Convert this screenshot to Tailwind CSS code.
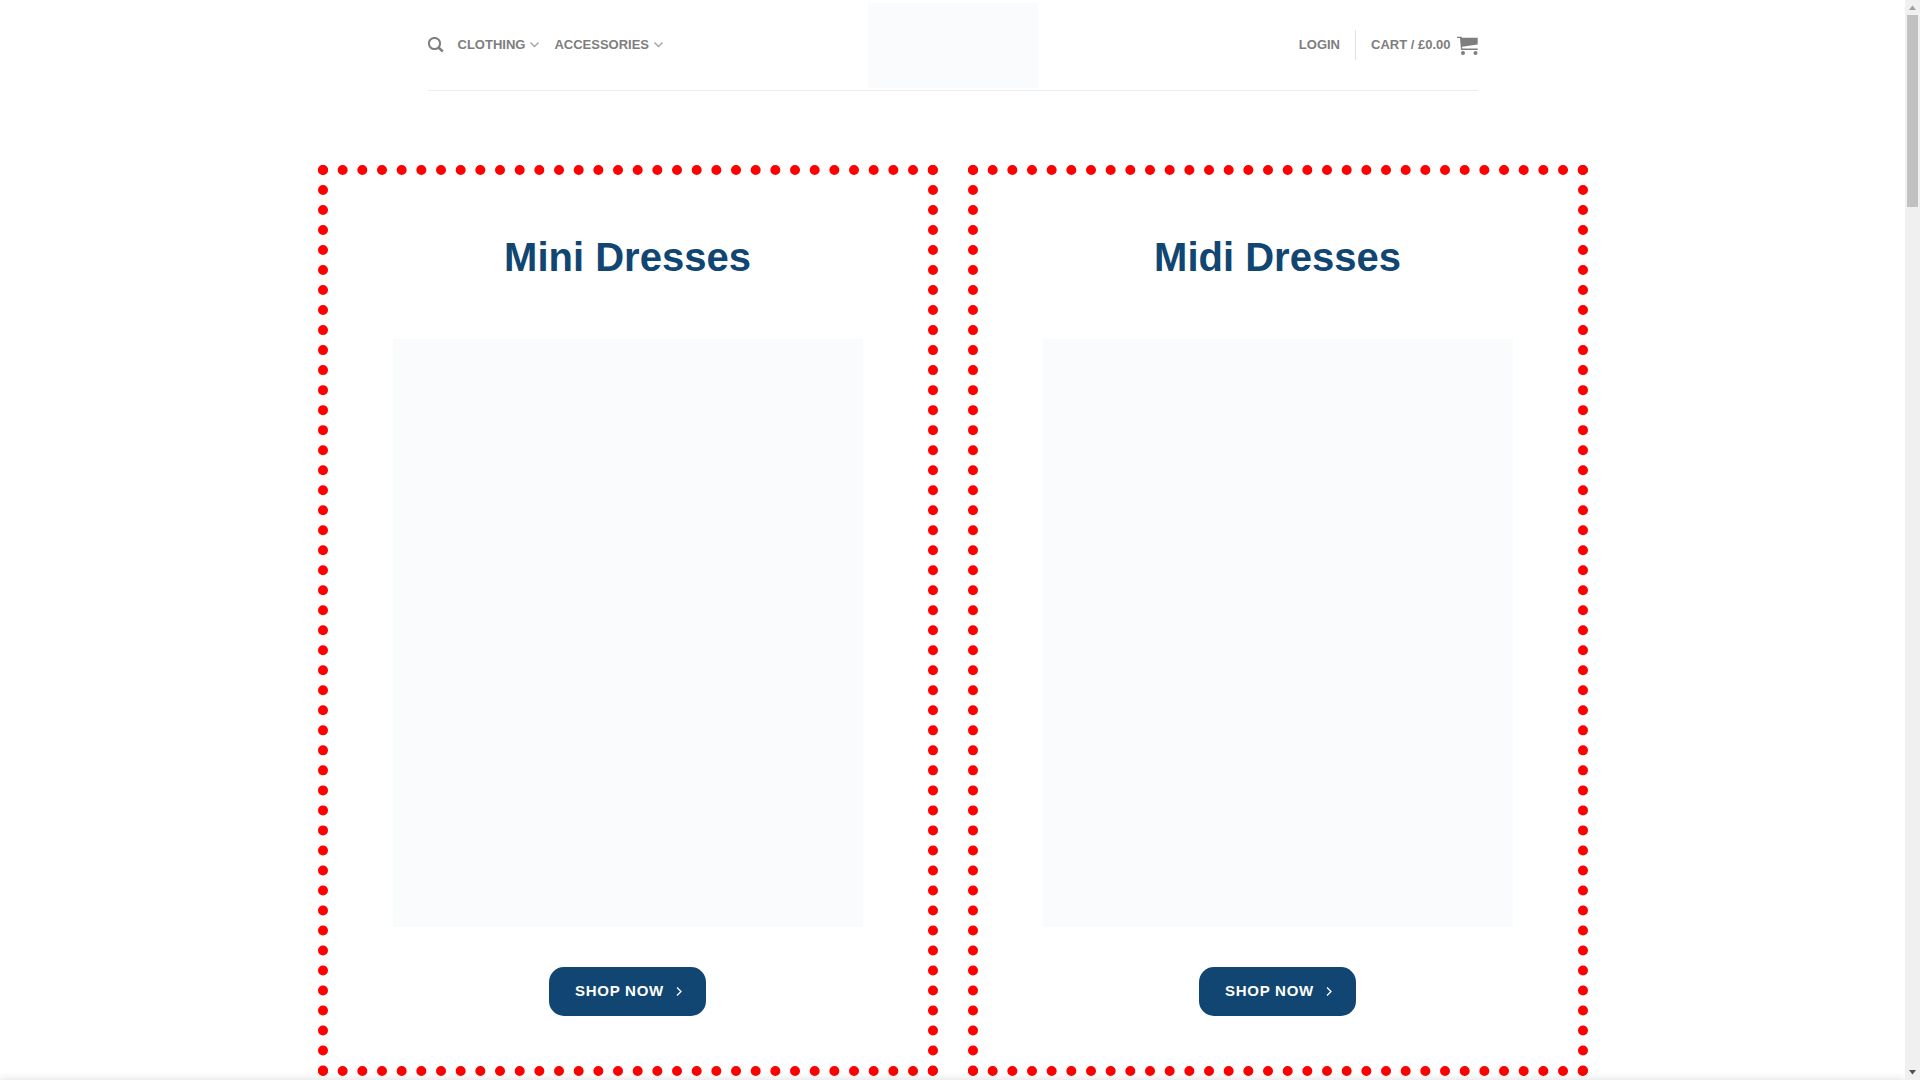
<!DOCTYPE html>
<html lang="en">

<head>
    <meta charset="UTF-8">
    <meta name="viewport" content="width=device-width, initial-scale=1.0">
    <title>Dresses</title>
    <script src="https://cdn.jsdelivr.net/npm/@tailwindcss/browser@4"></script>
</head>

<body class="flex min-h-screen bg-white font-['Liberation_Sans',Arial,sans-serif]">
    <div class="flex-1 min-w-0">
        <header class="mx-auto max-w-[1050px] flex items-center h-[91px] border-b border-[#ececec] text-[13px] font-bold text-[#7e7e7e]">
            <nav class="flex-1 flex items-center gap-[14px]">
                <a href="#" aria-label="Search">
                    <svg class="w-4 h-4" viewBox="0 0 16 16" fill="none" stroke="currentColor" stroke-width="2">
                        <circle cx="6.5" cy="6.5" r="5.6" />
                        <path d="M10.5 10.5l4.300 4" stroke-width="2.4" />
                    </svg>
                </a>
                <a href="#" class="flex items-center gap-1">CLOTHING
                    <svg class="w-[11px] h-[10px]" viewBox="0 0 11 10" fill="none" stroke="#a4a4a4" stroke-width="1.4">
                        <path d="M1.500 2.5l4 4 4-4" />
                    </svg>
                </a>
                <a href="#" class="flex items-center gap-1">ACCESSORIES
                    <svg class="w-[11px] h-[10px]" viewBox="0 0 11 10" fill="none" stroke="#a4a4a4" stroke-width="1.4">
                        <path d="M1.500 2.5l4 4 4-4" />
                    </svg>
                </a>
            </nav>

            <a href="#" aria-label="Home" class="block w-[170px] h-[85px] bg-[#fafbfd]"></a>

            <div class="flex-1 flex items-center justify-end gap-[15px]">
                <a href="#">LOGIN</a>
                <span class="w-px h-[30px] bg-[#e2e2e2]"></span>
                <a href="#" class="flex items-center gap-[6px]">CART / £0.00
                    <svg class="w-[21px] h-5" viewBox="0 0 21 20" fill="currentColor">
                        <path d="M0 1.700h4.4l.5 1H20.700v6.900L5 11.700l.2 1.900H20.700v1.300H4L3 3H0z" />
                        <circle cx="6" cy="18" r="2" />
                        <circle cx="18.500" cy="18" r="2" />
                    </svg>
                </a>
            </div>
        </header>

        <main class="mx-auto max-w-[1270px] pt-[74px] grid grid-cols-2 gap-[30px]">
            <section class="flex flex-col items-center border-[10px] border-dotted border-[#ff0000] px-[65px] pt-14 pb-[50px]">
                <h2 class="text-[40px] leading-[52px] font-bold text-[#114672]">Mini Dresses</h2>
                <div class="mt-14 w-full h-[588px] bg-[#fafbfd]"></div>
                <button class="mt-10 flex items-center gap-3 h-[49px] pl-[26px] pr-6 rounded-[15px] bg-[#114672] text-[15px] font-bold tracking-wider text-white">SHOP NOW
                    <svg class="w-1.5 h-[10px]" viewBox="0 0 6 10" fill="none" stroke="currentColor" stroke-width="1.3">
                        <path d="M1 .500l4 4-4 4" />
                    </svg>
                </button>
            </section>

            <section class="flex flex-col items-center border-[10px] border-dotted border-[#ff0000] px-[65px] pt-14 pb-[50px]">
                <h2 class="text-[40px] leading-[52px] font-bold text-[#114672]">Midi Dresses</h2>
                <div class="mt-14 w-full h-[588px] bg-[#fafbfd]"></div>
                <button class="mt-10 flex items-center gap-3 h-[49px] pl-[26px] pr-6 rounded-[15px] bg-[#114672] text-[15px] font-bold tracking-wider text-white">SHOP NOW
                    <svg class="w-1.5 h-[10px]" viewBox="0 0 6 10" fill="none" stroke="currentColor" stroke-width="1.3">
                        <path d="M1 .500l4 4-4 4" />
                    </svg>
                </button>
            </section>
        </main>
    </div>

    <!-- bottom bar, parked below the window: only its shadow shows -->
    <div class="fixed left-0 right-[15px] top-full h-10 shadow-[0_0_9px_rgba(0,0,0,0.15)]"></div>

    <!-- scrollbar -->
    <div class="sticky top-0 h-screen w-[15px] bg-[#f0f0f0] flex flex-col items-center">
        <svg class="w-[15px] h-[15px]" viewBox="0 0 15 15" fill="#a0a0a0">
            <path d="M7.500 5.500L11 10H4z" />
        </svg>
        <div class="w-[11px] h-48 bg-[#c1c1c1]"></div>
        <svg class="mt-auto w-[15px] h-[15px]" viewBox="0 0 15 15" fill="#505050">
            <path d="M7.500 9.500L11 5H4z" />
        </svg>
    </div>
</body>

</html>
